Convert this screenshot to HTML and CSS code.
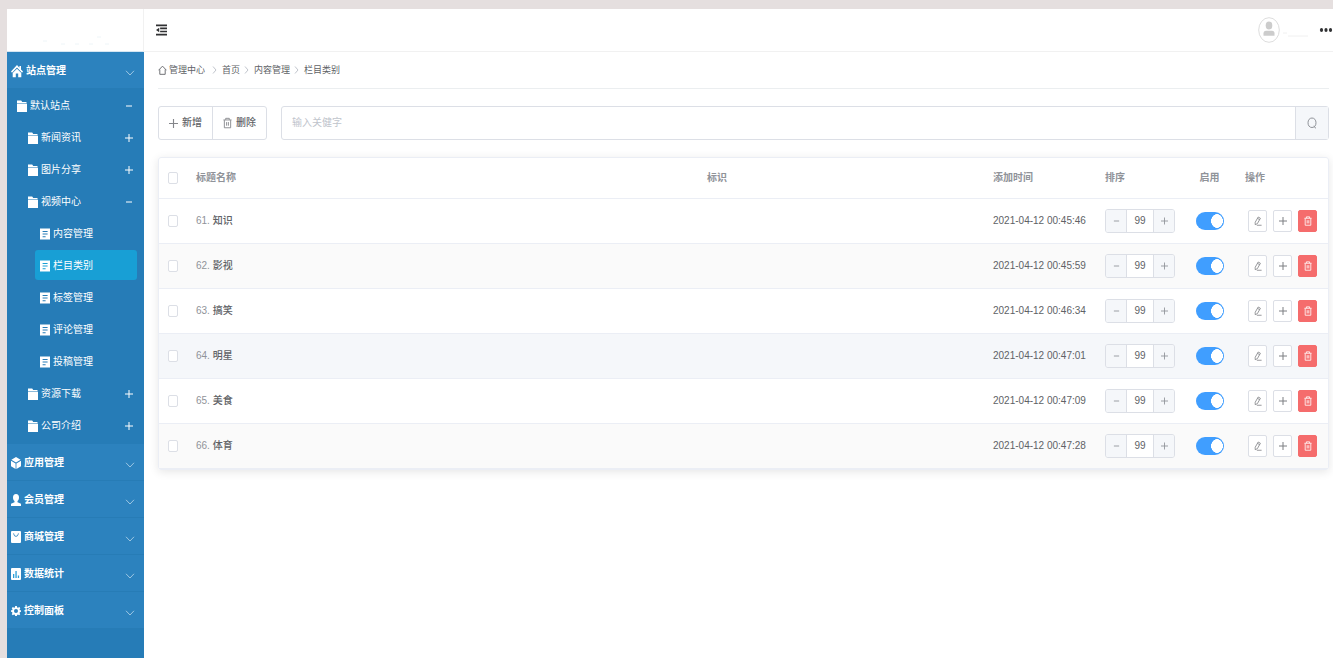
FILE: index.html
```html
<!DOCTYPE html>
<html lang="zh-CN">
<head>
    <meta charset="UTF-8">
    <meta name="viewport" content="width=device-width, initial-scale=1.0">
    <title>栏目类别</title>
    <link rel="stylesheet" href="styles.css">
</head>
<body>
    <!-- 图标库 -->
    <svg class="sprite" aria-hidden="true">
        <symbol id="i-home" viewBox="0 0 12 14"><path d="M6 1 0 7.6l1 1.1L6 3.6l5 5.1 1-1.1-2-2.2V2H8.4v1.7z"/><path d="M6 4.7 1.7 9v4.2h3.1V9.6h2.4v3.6h3.1V9z"/></symbol>
        <symbol id="i-folder" viewBox="0 0 10 12"><path d="M0 .5h4.2l1 1.500H9.500v1.300H0z"/><path d="M0 3.700h10V12H0z"/></symbol>
        <symbol id="i-doc" viewBox="0 0 10 12"><path fill-rule="evenodd" d="M0 .5h10v11H0zM2.6 3v1h5V3zm0 2.6v1h5v-1zm0 2.6v1h3v-1z"/></symbol>
        <symbol id="i-cube" viewBox="0 0 10 12"><path d="M5 0 9.6 2.8 5 5.4.4 2.8zM0 3.8l4.6 2.6V12L0 9.2zM10 3.8 5.4 6.4V12L10 9.2z"/></symbol>
        <symbol id="i-user" viewBox="0 0 10 12"><path d="M5 0c2 0 3 1.4 3 3.4 0 1.700-.7 2.900-1.500 3.600v1.200L10 9.700V12H0V9.700l3.500-1.500V7C2.700 6.300 2 5.100 2 3.400 2 1.400 3 0 5 0z"/></symbol>
        <symbol id="i-bag" viewBox="0 0 10 12"><path fill-rule="evenodd" d="M1 0h8q1 0 1 1v10q0 1-1 1H1q-1 0-1-1V1q0-1 1-1zm1.300 2.200C2.500 6.800 7.500 6.800 7.700 2.200H7C6.700 5.600 3.300 5.600 3 2.200z"/></symbol>
        <symbol id="i-chart" viewBox="0 0 10 12"><rect width="10" height="12" rx="1"/><path fill="#2c9fd8" d="M2 6h1.300v4H2zM4.400 3h1.300v7H4.400zM6.800 7.500h1.300V10H6.800z"/></symbol>
        <symbol id="i-gear" viewBox="0 0 12 12"><path fill-rule="evenodd" d="M5 0h2l.4 1.700 1 .4L10 1.200 11.200 2.600l-.9 1.400.4 1L12 5.200v1.800l-1.400.4-.4 1 .9 1.500-1.300 1.300-1.500-.9-1 .4L7 12H5l-.4-1.400-1-.4-1.400.9L.9 9.800l.8-1.500-.4-1L0 7V5.200L1.400 5l.4-1L.9 2.600 2.200 1.200l1.500.9 1-.4zM6 3.600A2.400 2.400 0 1 0 6 8.400 2.400 2.400 0 1 0 6 3.600z"/></symbol>
        <symbol id="i-down" viewBox="0 0 10 6"><path class="line" d="M1 .8 5 5 9 .8"/></symbol>
        <symbol id="i-right" viewBox="0 0 5 8"><path class="line" d="M1 .5 4 4 1 7.500"/></symbol>
        <symbol id="i-plus" viewBox="0 0 8 8"><path class="line" d="M0 4h8M4 0v8"/></symbol>
        <symbol id="i-minus" viewBox="0 0 8 8"><path class="line" d="M1 4h6"/></symbol>
        <symbol id="i-house" viewBox="0 0 10 12"><path class="line" d="M.6 6.300 5 1.700l4.400 4.600M2 5.500v5.300h6V5.500"/></symbol>
        <symbol id="i-trash" viewBox="0 0 10 12"><path class="line" d="M.5 2.600h9M3 2.400V.8h4v1.600M1.500 2.800v8.500h7V2.800M4 5v4M6 5v4"/></symbol>
        <symbol id="i-edit" viewBox="0 0 10 12"><path class="line" d="M5.300 1 8 2.600 4.200 9.300 1.500 10.600 1.500 7.600zM4.400 2.700l2.600 1.600M3.500 11.300h6"/></symbol>
        <symbol id="i-search" viewBox="0 0 10 12"><path class="line" d="M5 1C2.600 1 1 3 1 5.800s1.600 4.700 4 4.700 4-1.900 4-4.700S7.400 1 5 1zM6.600 9.200 9 11.300"/></symbol>
        <symbol id="i-fold" viewBox="0 0 12 12"><path d="M0 0h12v2H0zM4.500 3.400h7.500v1.700H4.500zM4.500 6.800h7.500v1.700H4.500zM0 10h12v2H0zM0 6l3.500-2.400v4.800z"/></symbol>
    </svg>

    <div class="layout">
        <!-- 左侧导航 -->
        <aside class="sidebar">
            <div class="logo">
                <svg viewBox="0 0 136 42"><path d="M36 32h4M54 35h4M68 35h4M82 35h4M90 28h4M98 35h4"/></svg>
            </div>
            <nav>
                <a class="group" href="#"><svg class="icon home"><use href="#i-home"/></svg><span>站点管理</span><svg class="arrow"><use href="#i-down"/></svg></a>
                <div class="submenu">
                    <a class="item" href="#"><svg class="icon"><use href="#i-folder"/></svg><span>默认站点</span><svg class="sign"><use href="#i-minus"/></svg></a>
                    <a class="item level2" href="#"><svg class="icon"><use href="#i-folder"/></svg><span>新闻资讯</span><svg class="sign"><use href="#i-plus"/></svg></a>
                    <a class="item level2" href="#"><svg class="icon"><use href="#i-folder"/></svg><span>图片分享</span><svg class="sign"><use href="#i-plus"/></svg></a>
                    <a class="item level2" href="#"><svg class="icon"><use href="#i-folder"/></svg><span>视频中心</span><svg class="sign"><use href="#i-minus"/></svg></a>
                    <a class="item level3" href="#"><svg class="icon"><use href="#i-doc"/></svg><span>内容管理</span></a>
                    <a class="item level3 active" href="#"><svg class="icon"><use href="#i-doc"/></svg><span>栏目类别</span></a>
                    <a class="item level3" href="#"><svg class="icon"><use href="#i-doc"/></svg><span>标签管理</span></a>
                    <a class="item level3" href="#"><svg class="icon"><use href="#i-doc"/></svg><span>评论管理</span></a>
                    <a class="item level3" href="#"><svg class="icon"><use href="#i-doc"/></svg><span>投稿管理</span></a>
                    <a class="item level2" href="#"><svg class="icon"><use href="#i-folder"/></svg><span>资源下载</span><svg class="sign"><use href="#i-plus"/></svg></a>
                    <a class="item level2" href="#"><svg class="icon"><use href="#i-folder"/></svg><span>公司介绍</span><svg class="sign"><use href="#i-plus"/></svg></a>
                </div>
                <a class="group" href="#"><svg class="icon"><use href="#i-cube"/></svg><span>应用管理</span><svg class="arrow"><use href="#i-down"/></svg></a>
                <a class="group" href="#"><svg class="icon"><use href="#i-user"/></svg><span>会员管理</span><svg class="arrow"><use href="#i-down"/></svg></a>
                <a class="group" href="#"><svg class="icon"><use href="#i-bag"/></svg><span>商城管理</span><svg class="arrow"><use href="#i-down"/></svg></a>
                <a class="group" href="#"><svg class="icon"><use href="#i-chart"/></svg><span>数据统计</span><svg class="arrow"><use href="#i-down"/></svg></a>
                <a class="group" href="#"><svg class="icon"><use href="#i-gear"/></svg><span>控制面板</span><svg class="arrow"><use href="#i-down"/></svg></a>
            </nav>
        </aside>

        <div class="main">
            <!-- 顶栏 -->
            <header class="header">
                <button class="fold-btn" aria-label="折叠菜单"><svg><use href="#i-fold"/></svg></button>
                <div class="user">
                    <svg class="avatar" viewBox="0 0 22 26"><ellipse class="ring" cx="11" cy="13" rx="10.300" ry="12.300"/><ellipse cx="11" cy="8.500" rx="3.300" ry="4"/><path d="M5.500 18.800v-2.500q0-2.500 2.500-2.500h6q2.500 0 2.500 2.500v2.500z"/></svg>
                    <svg class="user-line" viewBox="0 0 26 10"><path d="M0 6h4M5 9h20"/></svg>
                    <button class="more-btn" aria-label="更多"><svg viewBox="0 0 13 4"><ellipse cx="2" cy="2" rx="1.600" ry="2"/><ellipse cx="6.500" cy="2" rx="1.600" ry="2"/><ellipse cx="11" cy="2" rx="1.600" ry="2"/></svg></button>
                </div>
            </header>

            <div class="content">
                <div class="breadcrumb">
                    <a href="#"><svg class="house"><use href="#i-house"/></svg>管理中心</a>
                    <svg class="sep wide"><use href="#i-right"/></svg>
                    <a href="#">首页</a>
                    <svg class="sep"><use href="#i-right"/></svg>
                    <a href="#">内容管理</a>
                    <svg class="sep"><use href="#i-right"/></svg>
                    <span>栏目类别</span>
                </div>

                <!-- 操作与搜索 -->
                <div class="toolbar">
                    <div class="btn-group">
                        <button><svg class="plus"><use href="#i-plus"/></svg>新增</button>
                        <button><svg class="trash"><use href="#i-trash"/></svg>删除</button>
                    </div>
                    <div class="search">
                        <input type="text" placeholder="输入关健字" aria-label="输入关健字">
                        <button aria-label="搜索"><svg><use href="#i-search"/></svg></button>
                    </div>
                </div>

                <!-- 数据列表 -->
                <table class="table">
                    <colgroup>
                        <col class="col-check"><col><col class="col-mark"><col class="col-time"><col class="col-sort"><col class="col-on"><col class="col-ops">
                    </colgroup>
                    <thead>
                        <tr>
                            <th><input class="check" type="checkbox" aria-label="全选"></th>
                            <th>标题名称</th>
                            <th>标识</th>
                            <th>添加时间</th>
                            <th>排序</th>
                            <th class="center">启用</th>
                            <th>操作</th>
                        </tr>
                    </thead>
                    <tbody id="rows"></tbody>
                </table>
            </div>
        </div>
    </div>

    <script src="script.js"></script>
</body>
</html>
```
FILE: styles.css
```css
* {
    margin: 0;
    padding: 0;
    box-sizing: border-box;
}

body {
    font-family: "Liberation Sans", "Noto Sans CJK SC", sans-serif;
    font-size: 10px;
    line-height: 16px;
    color: #606266;
    background-color: #e5dfdf;
}

a {
    color: inherit;
    text-decoration: none;
}

button,
input {
    font: inherit;
    color: inherit;
}

button {
    background: none;
    border: none;
    cursor: pointer;
}

svg {
    display: block;
    flex-shrink: 0;
    fill: currentColor;
}

.sprite {
    position: absolute;
    width: 0;
    height: 0;
}

.line {
    fill: none;
    stroke: currentColor;
}

.layout {
    display: flex;
    min-height: 100vh;
    padding: 9px 0 0 7px;
}

/* 左侧导航 */
.sidebar {
    width: 137px;
    flex-shrink: 0;
    background-color: #267cb7;
    color: #fff;
}

.logo {
    height: 43px;
    background-color: #fff;
    border-right: 1px solid #f1f1f1;
    border-bottom: 1px solid #d5e6f2;
}

.logo svg {
    width: 100%;
    height: 42px;
    fill: none;
    stroke: #eef5f8;
}

.group {
    display: flex;
    align-items: center;
    gap: 3px;
    height: 37px;
    padding: 2px 9px 0 4px;
    background-color: #2c82be;
    border-bottom: 1px solid #277cb6;
    font-weight: bold;
}

.icon {
    width: 10px;
    height: 12px;
}

.icon.home {
    width: 12px;
    height: 14px;
}

.arrow {
    width: 10px;
    height: 6px;
    margin: 4px 0 0 auto;
    color: #9cc6e2;
}

.submenu {
    padding: 1px 0 2px;
}

.item {
    display: flex;
    align-items: center;
    gap: 3px;
    height: 30px;
    margin: 1px 7px 2px 5px;
    padding: 1px 4px 0 5px;
    border-radius: 3px;
}

.item:first-child {
    margin-top: 0;
}

.item .sign {
    width: 8px;
    height: 8px;
    margin-left: auto;
}

.level2 {
    margin-left: 16px;
}

.level3 {
    margin-left: 28px;
}

.item.active {
    background-color: #189fd5;
}

/* 主区域 */
.main {
    flex: 1;
    min-width: 0;
    background-color: #fff;
}

.header {
    display: flex;
    align-items: center;
    justify-content: space-between;
    height: 43px;
    padding-left: 12px;
    border-bottom: 1px solid #f1f1f1;
    color: #303133;
}

.fold-btn svg {
    width: 11px;
    height: 12px;
}

.user {
    display: flex;
    align-items: center;
}

.avatar {
    width: 22px;
    height: 26px;
    color: #ccc;
}

.avatar .ring {
    fill: #fff;
    stroke: #ddd;
}

.user-line {
    width: 26px;
    height: 10px;
    margin: 4px 10px 0 3px;
    fill: none;
    stroke: #f0f0f0;
}

.more-btn svg {
    width: 14px;
    height: 4px;
}

.content {
    padding: 0 4px 20px 14px;
}

.breadcrumb {
    display: flex;
    align-items: center;
    height: 37px;
    border-bottom: 1px solid #ebeef0;
    font-size: 9px;
}

.breadcrumb a {
    display: flex;
    align-items: center;
    gap: 2px;
}

.house {
    width: 9px;
    height: 12px;
}

.sep {
    width: 5px;
    height: 8px;
    margin: 0 5px 0 4px;
    color: #c0c4cc;
}

.sep.wide {
    margin: 0 5px 0 7px;
}

.toolbar {
    display: flex;
    gap: 14px;
    margin: 17px 0;
}

.btn-group {
    display: flex;
    border: 1px solid #dcdfe6;
    border-radius: 3px;
}

.btn-group button {
    display: flex;
    align-items: center;
    gap: 4px;
    padding: 0 10px;
    font-weight: 500;
}

.btn-group button + button {
    border-left: 1px solid #dcdfe6;
}

.btn-group svg {
    color: #84868a;
}

.plus {
    width: 9px;
    height: 9px;
}

.trash {
    width: 9px;
    height: 12px;
}

.search {
    display: flex;
    flex: 1;
    height: 34px;
    border: 1px solid #dcdfe6;
    border-radius: 3px;
}

.search input {
    flex: 1;
    min-width: 0;
    padding: 0 10px;
    border: none;
    outline: none;
    background: none;
}

.search input::placeholder {
    color: #c0c4cc;
}

.search button {
    display: flex;
    align-items: center;
    justify-content: center;
    width: 33px;
    background-color: #f5f7fa;
    border-left: 1px solid #dcdfe6;
    color: #909399;
}

.search svg {
    width: 10px;
    height: 12px;
}

/* 表格 */
.table {
    width: 100%;
    table-layout: fixed;
    border-collapse: separate;
    border-spacing: 0;
    border: 1px solid #ebeef5;
    border-radius: 3px;
    box-shadow: 0 2px 10px rgba(0, 0, 0, 0.1);
}

.col-check {
    width: 27px;
}

.col-mark {
    width: 286px;
}

.col-time {
    width: 112px;
}

.col-sort {
    width: 89px;
}

.col-on {
    width: 51px;
}

.col-ops {
    width: 93px;
}

.table th,
.table td {
    padding: 0 0 0 10px;
    border-bottom: 1px solid #ebeef5;
    text-align: left;
    vertical-align: middle;
}

.table th:first-child,
.table td:first-child {
    padding-left: 9px;
}

.table th {
    height: 41px;
    color: #909399;
}

.table td {
    height: 45px;
}

.table .center {
    padding: 0;
    text-align: center;
}

.table tbody tr:nth-child(even) {
    background-color: #fafafa;
}

.table tbody tr.hover {
    background-color: #f5f7fa;
}

.num {
    color: #909399;
}

.name {
    font-weight: 500;
}

.check {
    display: block;
    appearance: none;
    width: 10px;
    height: 12px;
    background-color: #fff;
    border: 1px solid #dcdfe6;
    border-radius: 2px;
}

.stepper {
    display: flex;
    width: 70px;
    height: 24px;
    border: 1px solid #dcdfe6;
    border-radius: 3px;
    overflow: hidden;
}

.stepper button {
    display: flex;
    align-items: center;
    justify-content: center;
    width: 20px;
    background-color: #f5f7fa;
    color: #909399;
}

.stepper svg {
    width: 7px;
    height: 8px;
}

.stepper input {
    flex: 1;
    min-width: 0;
    border: 1px solid #dcdfe6;
    border-width: 0 1px;
    text-align: center;
    background-color: #fff;
}

.switch {
    display: block;
    appearance: none;
    width: 28px;
    height: 18px;
    margin: 0 auto;
    border-radius: 9px;
    background: radial-gradient(ellipse 6px 7px at 21px 9px, #fff 95%, transparent) #409eff;
}

.ops {
    display: flex;
    gap: 6px;
    padding-left: 3px;
}

.ops button {
    display: flex;
    align-items: center;
    justify-content: center;
    width: 19px;
    height: 22px;
    border: 1px solid #dcdfe6;
    border-radius: 2px;
    background-color: #fff;
    color: #7c7e82;
}

.ops svg {
    width: 8px;
    height: 10px;
}

.ops .danger {
    background-color: #f56c6c;
    border-color: #f56c6c;
    color: #fff;
}
```
FILE: script.js
```js
// 栏目数据
const rows = [
    { id: 61, name: "知识", time: "2021-04-12 00:45:46" },
    { id: 62, name: "影视", time: "2021-04-12 00:45:59" },
    { id: 63, name: "搞笑", time: "2021-04-12 00:46:34" },
    { id: 64, name: "明星", time: "2021-04-12 00:47:01", hover: true },
    { id: 65, name: "美食", time: "2021-04-12 00:47:09" },
    { id: 66, name: "体育", time: "2021-04-12 00:47:28" }
];

const icon = (name) => `<svg><use href="#i-${name}"/></svg>`;

document.getElementById("rows").innerHTML = rows.map((row) => `
    <tr class="${row.hover ? "hover" : ""}">
        <td><input class="check" type="checkbox" aria-label="选择${row.name}"></td>
        <td><span class="num">${row.id}.</span> <span class="name">${row.name}</span></td>
        <td></td>
        <td>${row.time}</td>
        <td>
            <div class="stepper">
                <button aria-label="减少">${icon("minus")}</button>
                <input type="text" value="99" aria-label="排序">
                <button aria-label="增加">${icon("plus")}</button>
            </div>
        </td>
        <td class="center"><input class="switch" type="checkbox" aria-label="启用" checked></td>
        <td>
            <div class="ops">
                <button aria-label="编辑">${icon("edit")}</button>
                <button aria-label="新增">${icon("plus")}</button>
                <button class="danger" aria-label="删除">${icon("trash")}</button>
            </div>
        </td>
    </tr>`).join("");
```
